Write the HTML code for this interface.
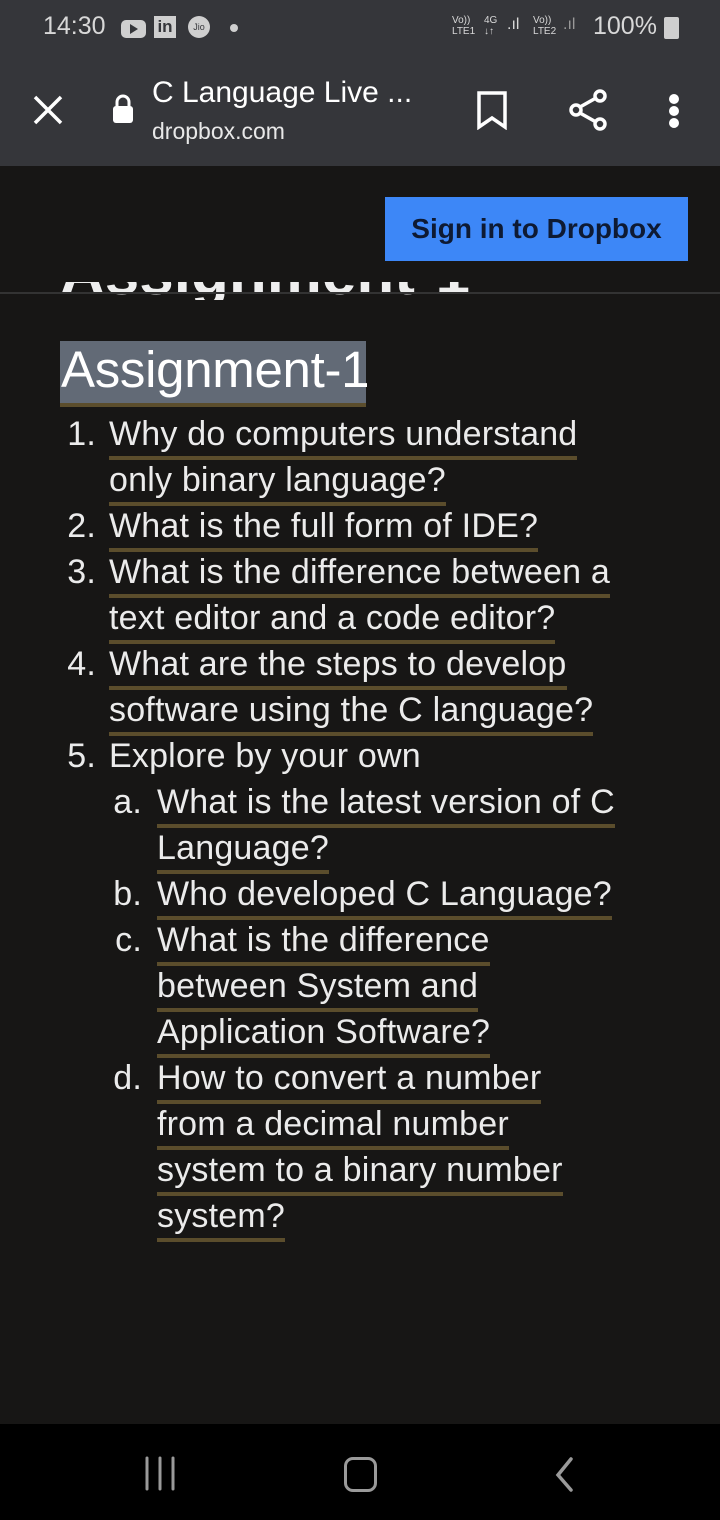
<!DOCTYPE html>
<html><head><meta charset="utf-8"><style>
*{margin:0;padding:0;box-sizing:border-box}
body{width:720px;height:1520px;background:#171615;font-family:"Liberation Sans",sans-serif;position:relative;overflow:hidden;color:#ebebeb}
.top{position:absolute;left:0;top:0;width:720px;height:166px;background:#35363a}
.abs{position:absolute}
.ln{position:absolute;height:46px;font-size:34px;line-height:40px;white-space:nowrap;letter-spacing:0.2px}
.ln span.u{display:inline-block;border-bottom:4px solid #5b4d2c;height:46px}
.num{position:absolute;text-align:right;width:44px}
</style></head><body>
<div class="top"></div>
<div class="abs" style="left:43px;top:12px;font-size:25px;color:#d8d8d8">14:30</div>
<div class="abs" style="left:121px;top:20px;width:25px;height:18px;background:#cfcfcf;border-radius:5px"></div>
<div class="abs" style="left:130px;top:24px;width:0;height:0;border-left:8px solid #35363a;border-top:5px solid transparent;border-bottom:5px solid transparent"></div>
<div class="abs" style="left:154px;top:16px;width:22px;height:22px;background:#cfcfcf;color:#35363a;font-size:17px;font-weight:bold;text-align:center;line-height:22px">in</div>
<div class="abs" style="left:188px;top:16px;width:22px;height:22px;background:#cfcfcf;border-radius:50%;color:#35363a;font-size:9px;text-align:center;line-height:22px">Jio</div>
<div class="abs" style="left:230px;top:24px;width:8px;height:8px;background:#cfcfcf;border-radius:50%"></div>
<div class="abs" style="left:452px;top:15px;font-size:10px;line-height:11px;color:#d8d8d8">Vo))<br>LTE1</div>
<div class="abs" style="left:484px;top:15px;font-size:10px;line-height:11px;color:#d8d8d8">4G<br>↓↑</div>
<div class="abs" style="left:507px;top:16px;font-size:16px;color:#d8d8d8">.ıl</div>
<div class="abs" style="left:533px;top:15px;font-size:10px;line-height:11px;color:#d8d8d8">Vo))<br>LTE2</div>
<div class="abs" style="left:563px;top:16px;font-size:16px;color:#999">.ıl</div>
<div class="abs" style="left:593px;top:12px;font-size:25px;color:#d8d8d8">100%</div>
<div class="abs" style="left:664px;top:17px;width:15px;height:22px;background:#cfcfcf;border-radius:2px"></div>
<svg class="abs" style="left:30px;top:92px" width="36" height="36" viewBox="0 0 36 36"><path d="M5 5L31 31M31 5L5 31" stroke="#fff" stroke-width="3.5"/></svg>
<svg class="abs" style="left:110px;top:93px" width="26" height="32" viewBox="0 0 26 32"><path d="M7 14V9a6 6 0 0 1 12 0v5" stroke="#fff" stroke-width="3" fill="none"/><rect x="3" y="13" width="20" height="17" rx="3" fill="#fff"/></svg>
<div class="abs" style="left:152px;top:76px;font-size:30px;color:#fff">C Language Live ...</div>
<div class="abs" style="left:152px;top:118px;font-size:23px;color:#e8e8e8">dropbox.com</div>
<svg class="abs" style="left:475px;top:90px" width="34" height="40" viewBox="0 0 34 40"><path d="M4 3H30V37L17 28L4 37Z" stroke="#fff" stroke-width="3.5" fill="none"/></svg>
<svg class="abs" style="left:566px;top:88px" width="44" height="44" viewBox="0 0 44 44"><circle cx="34" cy="8" r="5" stroke="#fff" stroke-width="3.5" fill="none"/><circle cx="10" cy="22" r="5" stroke="#fff" stroke-width="3.5" fill="none"/><circle cx="34" cy="36" r="5" stroke="#fff" stroke-width="3.5" fill="none"/><path d="M14 19L30 10M14 25L30 34" stroke="#fff" stroke-width="3.5"/></svg>
<div class="abs" style="left:669px;top:94px;width:10px;height:10px;background:#fff;border-radius:50%"></div>
<div class="abs" style="left:669px;top:106px;width:10px;height:10px;background:#fff;border-radius:50%"></div>
<div class="abs" style="left:669px;top:118px;width:10px;height:10px;background:#fff;border-radius:50%"></div>

<div class="abs" style="left:385px;top:197px;width:303px;height:64px;background:#3d87f7;color:#0e1a33;font-size:28px;font-weight:bold;text-align:center;line-height:64px">Sign in to Dropbox</div>
<div class="abs" style="left:60px;top:238px;font-size:62px;font-weight:bold;color:#eee;height:62px;overflow:hidden;clip-path:inset(44px 0 0 0)">Assignment-1</div>
<div class="abs" style="left:0;top:292px;width:720px;height:2px;background:#333"></div>
<div class="abs" style="left:60px;top:341px;width:306px;height:62px;background:#626a76"></div>
<div class="abs" style="left:60px;top:403px;width:306px;height:4px;background:#5b4d2c"></div>
<div class="abs" style="left:61px;top:342px;font-size:51px;line-height:56px;color:#fff;letter-spacing:-0.3px">Assignment-1</div>

<div class="ln" style="left:0;top:414px"><span class="num" style="left:52px">1.</span><span class="u" style="margin-left:109px">Why do computers understand</span></div>
<div class="ln" style="left:109px;top:460px"><span class="u">only binary language?</span></div>
<div class="ln" style="left:0;top:506px"><span class="num" style="left:52px">2.</span><span class="u" style="margin-left:109px">What is the full form of IDE?</span></div>
<div class="ln" style="left:0;top:552px"><span class="num" style="left:52px">3.</span><span class="u" style="margin-left:109px">What is the difference between a</span></div>
<div class="ln" style="left:109px;top:598px"><span class="u">text editor and a code editor?</span></div>
<div class="ln" style="left:0;top:644px"><span class="num" style="left:52px">4.</span><span class="u" style="margin-left:109px">What are the steps to develop</span></div>
<div class="ln" style="left:109px;top:690px"><span class="u">software using the C language?</span></div>
<div class="ln" style="left:0;top:736px"><span class="num" style="left:52px">5.</span><span style="margin-left:109px">Explore by your own</span></div>
<div class="ln" style="left:0;top:782px"><span class="num" style="left:98px">a.</span><span class="u" style="margin-left:157px">What is the latest version of C</span></div>
<div class="ln" style="left:157px;top:828px"><span class="u">Language?</span></div>
<div class="ln" style="left:0;top:874px"><span class="num" style="left:98px">b.</span><span class="u" style="margin-left:157px">Who developed C Language?</span></div>
<div class="ln" style="left:0;top:920px"><span class="num" style="left:98px">c.</span><span class="u" style="margin-left:157px">What is the difference</span></div>
<div class="ln" style="left:157px;top:966px"><span class="u">between System and</span></div>
<div class="ln" style="left:157px;top:1012px"><span class="u">Application Software?</span></div>
<div class="ln" style="left:0;top:1058px"><span class="num" style="left:98px">d.</span><span class="u" style="margin-left:157px">How to convert a number</span></div>
<div class="ln" style="left:157px;top:1104px"><span class="u">from a decimal number</span></div>
<div class="ln" style="left:157px;top:1150px"><span class="u">system to a binary number</span></div>
<div class="ln" style="left:157px;top:1196px"><span class="u">system?</span></div>

<div class="abs" style="left:0;top:1424px;width:720px;height:96px;background:#000"></div>
<svg class="abs" style="left:140px;top:1455px" width="40" height="40" viewBox="0 0 40 40"><path d="M7 3V34M20 3V34M33 3V34" stroke="#9a9a9a" stroke-width="3" stroke-linecap="round"/></svg>
<div class="abs" style="left:344px;top:1457px;width:33px;height:35px;border:3.5px solid #9a9a9a;border-radius:9px"></div>
<svg class="abs" style="left:548px;top:1455px" width="30" height="40" viewBox="0 0 30 40"><path d="M23 4L10 20L23 35" stroke="#9a9a9a" stroke-width="3.5" fill="none" stroke-linecap="round"/></svg>
</body></html>
